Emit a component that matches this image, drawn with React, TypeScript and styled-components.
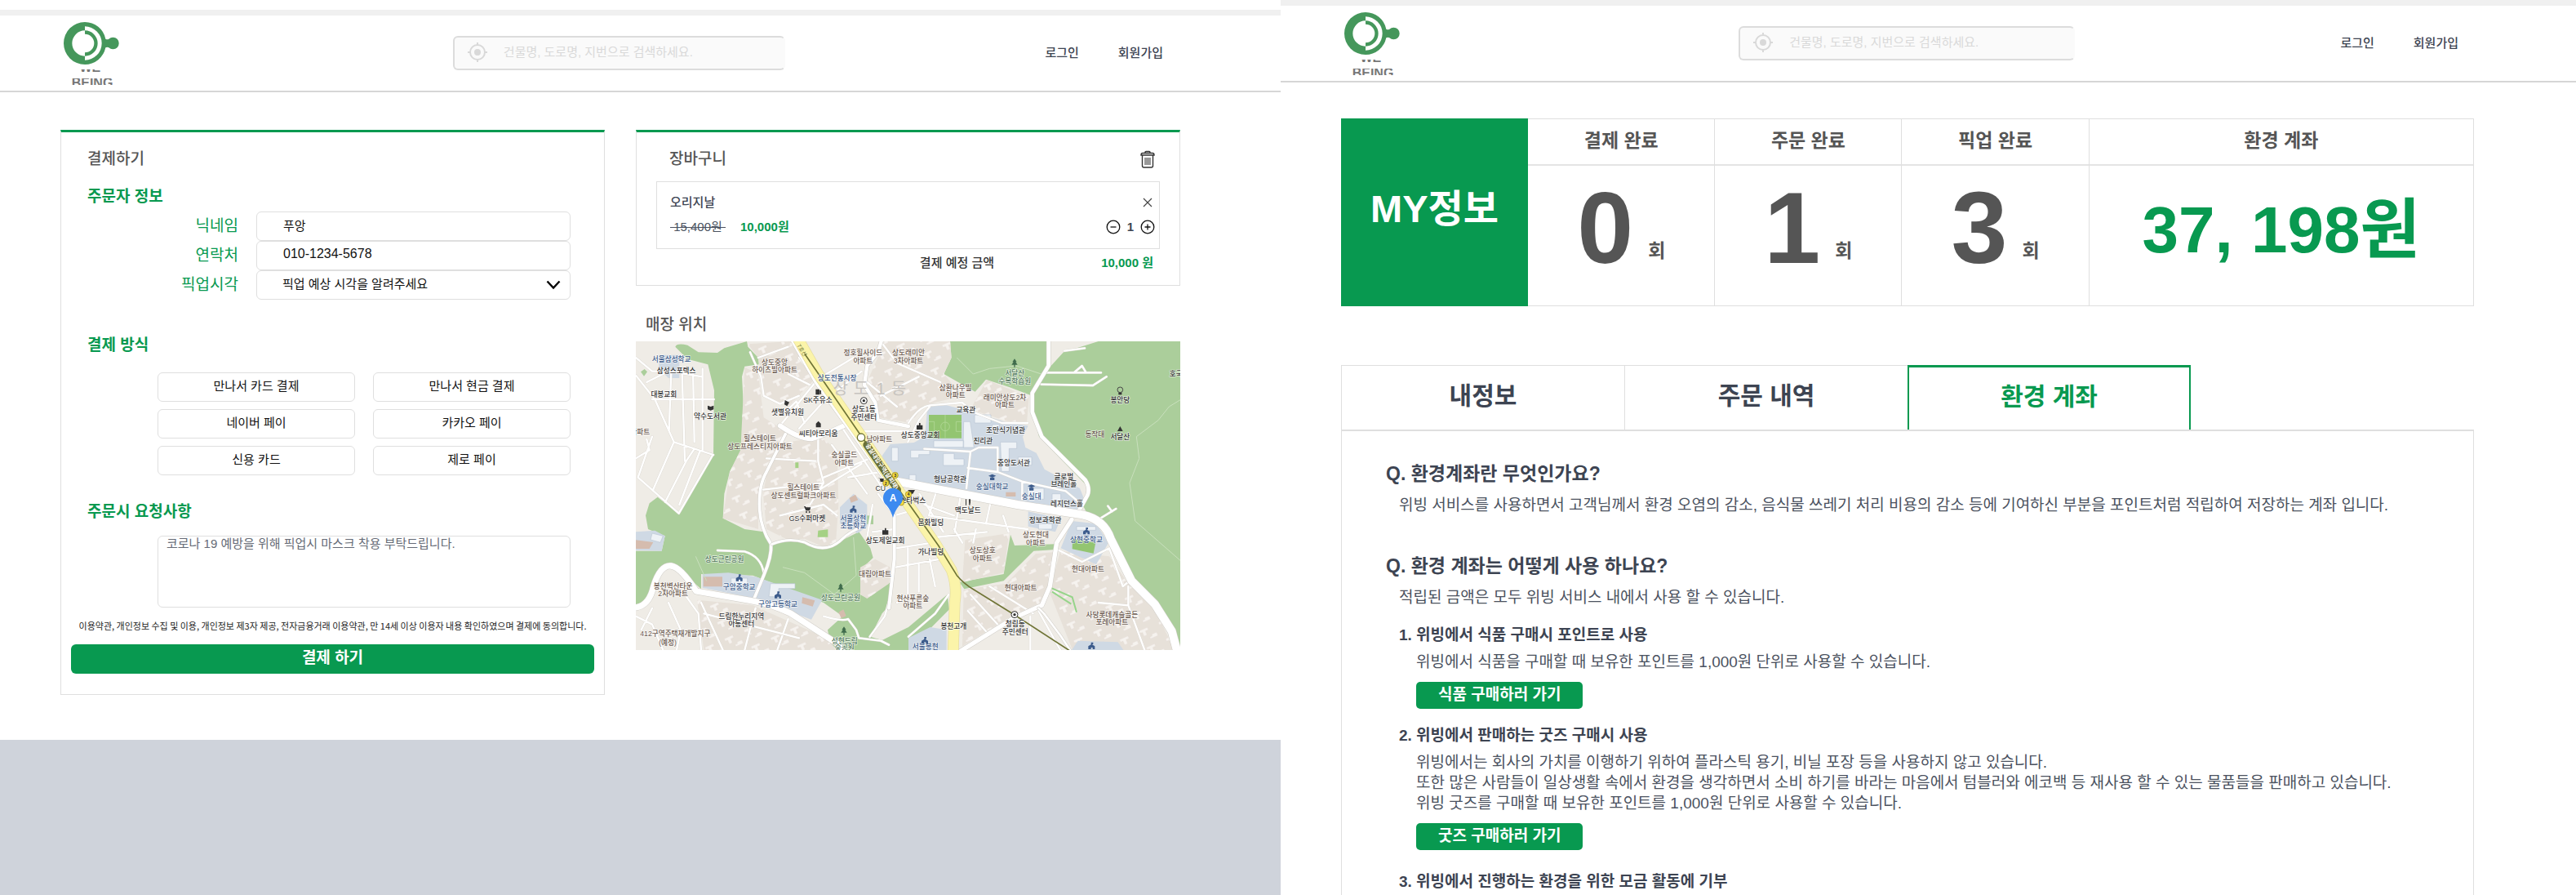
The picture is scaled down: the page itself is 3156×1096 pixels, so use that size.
import React from "react";
import styled, { createGlobalStyle } from "styled-components";

const color = {
  green: "#089950",
  logo: "#45975b",
  ink: "#3d4452",
  body: "#4b5260",
  title: "#555555",
  line: "#dfdfdf",
  pale: "#d9d9d9",
  backdrop: "#cfd3db",
};

const GlobalStyle = createGlobalStyle`
  *, *::before, *::after { box-sizing: border-box; }
  body {
    margin: 0;
    background: #fff;
    color: ${color.ink};
    font-family: "Liberation Sans", "Noto Sans CJK KR", sans-serif;
    font-size: 15px;
    line-height: 22px;
  }
  button, input, select, textarea { font: inherit; color: inherit; margin: 0; }
  button { cursor: pointer; }
  h1, h2, h3, p, dl, dt, dd { margin: 0; }
`;

/* ---------- shell ---------- */

const Screens = styled.div`
  display: grid;
  grid-template-columns: 1569fr 1587fr;
  min-height: 100vh;
`;

const Screen = styled.section<{ $backdrop?: boolean }>`
  display: flex;
  flex-direction: column;
  min-width: 0;
  height: 100vh;
  overflow: hidden;
  background: ${(p) => (p.$backdrop ? color.backdrop : "#fff")};
`;

const Sheet = styled.div<{ $inset?: boolean }>`
  display: flex;
  flex-direction: column;
  flex: ${(p) => (p.$inset ? "none" : "1")};
  padding-top: ${(p) => (p.$inset ? "12px" : "0")};
  background: #fff;
`;

const TopStrip = styled.div`
  height: 7px;
  background: #f0f0f0;
`;

const Header = styled.header`
  display: grid;
  grid-template-columns: 354fr 302fr 344fr;
  align-items: center;
  height: 94px;
  padding: 0 144px 0 78px;
  border-bottom: 2px solid #d6d6d6;
`;

const LogoLink = styled.a`
  display: flex;
  flex-direction: column;
  align-self: start;
  align-items: center;
  width: 70px;
  padding-top: 8px;
  color: #777;
  text-decoration: none;
  font-size: 16px;
  line-height: 12px;
`;

const LogoMark = styled.svg`
  flex: none;
  width: 70px;
  height: 52px;
`;

const WordTail = styled.span`
  display: flex;
  align-items: flex-end;
  height: 4px;
  margin: 6px 0 7px;
  font-weight: 700;
  overflow: hidden;
`;

const WordHead = styled.span`
  height: 8px;
  font-weight: 700;
  overflow: hidden;
`;

const SearchBox = styled.label`
  display: flex;
  align-items: center;
  gap: 20px;
  height: 42px;
  padding: 0 16px 2px;
  border: 2px solid #dcdcdc;
  border-right-color: transparent;
  border-radius: 6px;
  background: #fafafa;
`;

const SearchInput = styled.input`
  flex: 1;
  min-width: 0;
  padding: 0;
  border: 0;
  outline: 0;
  background: transparent;
  &::placeholder { color: ${color.pale}; opacity: 1; }
`;

const Nav = styled.nav`
  display: flex;
  justify-content: flex-end;
  gap: 48px;
`;

const NavLink = styled.a`
  color: ${color.ink};
  font-weight: 500;
  text-decoration: none;
`;

/* ---------- checkout ---------- */

const Checkout = styled.main`
  display: grid;
  grid-template-columns: 1fr 1fr;
  align-items: start;
  gap: 38px;
  padding: 46px 123px 55px 74px;
`;

const Card = styled.section<{ $pad: string }>`
  padding: ${(p) => p.$pad};
  border: 1px solid ${color.line};
  border-top: 3px solid ${color.green};
`;

const FormBody = styled.div`
  padding: 0 29px 0 20px;
`;

const CardTitle = styled.h2`
  font-size: 19px;
  font-weight: 500;
  line-height: 28px;
  color: ${color.title};
`;

const GroupTitle = styled.h3<{ $top: number }>`
  margin-top: ${(p) => p.$top}px;
  font-size: 19px;
  font-weight: 700;
  line-height: 28px;
  color: ${color.green};
`;

const Fields = styled.div`
  display: grid;
  grid-template-columns: 185px 1fr;
  column-gap: 22px;
  align-items: center;
  margin-top: 4px;
`;

const FieldLabel = styled.label`
  color: ${color.green};
  font-size: 19px;
  text-align: right;
`;

const TextField = styled.input<{ $numeric?: boolean }>`
  width: 100%;
  height: 36px;
  padding: 0 32px 4px;
  border: 1px solid ${color.line};
  border-radius: 6px;
  background: #fff;
  color: #111;
  font-size: ${(p) => (p.$numeric ? "16px" : "15px")};
`;

const SelectWrap = styled.div`
  display: grid;
  align-items: center;
  & > * { grid-area: 1 / 1; }
  & > svg { justify-self: end; margin-right: 12px; pointer-events: none; }
`;

const SelectField = styled.select`
  appearance: none;
  width: 100%;
  height: 36px;
  padding: 0 31px 3px;
  border: 1px solid ${color.line};
  border-radius: 6px;
  background: #fff;
  color: #111;
`;

const PayGrid = styled.div`
  display: grid;
  grid-template-columns: 1fr 1fr;
  gap: 9px 22px;
  margin-top: 19px;
  padding-left: 86px;
`;

const PayButton = styled.button`
  height: 36px;
  padding: 0 0 3px;
  border: 1px solid ${color.line};
  border-radius: 6px;
  background: #fff;
  color: #111;
`;

const RequestRow = styled.div`
  display: flex;
  margin-top: 15px;
  padding-left: 86px;
`;

const RequestBox = styled.textarea`
  width: 100%;
  height: 88px;
  padding: 0 10px;
  border: 1px solid ${color.line};
  border-radius: 6px;
  line-height: 18px;
  resize: none;
  &::placeholder { color: #666b76; opacity: 1; }
`;

const Terms = styled.p`
  margin-top: 12px;
  color: #222;
  font-family: "Noto Sans CJK KR", sans-serif;
  font-size: 11px;
  line-height: 20px;
  text-align: center;
`;

const SubmitButton = styled.button`
  width: 100%;
  height: 36px;
  margin-top: 13px;
  padding: 0 0 2px;
  border: 0;
  border-radius: 6px;
  background: ${color.green};
  color: #fff;
  font-size: 19px;
  font-weight: 700;
`;

const CartHead = styled.div`
  display: flex;
  align-items: center;
  justify-content: space-between;
  padding: 0 6px 0 16px;
`;

const IconButton = styled.button`
  display: flex;
  justify-content: center;
  align-items: center;
  width: 18px;
  height: 22px;
  padding: 0;
  border: 0;
  background: none;
  color: #333;
`;

const CartItem = styled.div`
  display: grid;
  row-gap: 8px;
  margin-top: 13px;
  padding: 14px 5px 15px 16px;
  border: 1px solid ${color.line};
`;

const ItemRow = styled.div`
  display: flex;
  align-items: center;
  justify-content: space-between;
`;

const ItemName = styled.span`
  font-weight: 500;
`;

const Prices = styled.span`
  display: flex;
  gap: 18px;
  white-space: pre;
`;

const OldPrice = styled.del`
  color: ${color.body};
`;

const Price = styled.strong`
  color: ${color.green};
  font-weight: 700;
`;

const Stepper = styled.div`
  display: flex;
  align-items: center;
  gap: 8px;
  font-weight: 700;
`;

const TotalRow = styled.div`
  display: flex;
  justify-content: flex-end;
  margin-top: 6px;
  padding-right: 8px;
  color: #333;
  font-weight: 500;
`;

const TotalPrice = styled(Price)`
  width: 195px;
  text-align: right;
`;

const MapTitle = styled(CardTitle)`
  margin: 34px 0 6px;
  padding-left: 12px;
`;

const MapSvg = styled.svg`
  display: block;
  width: 100%;
  height: auto;
`;

/* ---------- my page ---------- */

const MyPage = styled.main`
  display: flex;
  flex: 1;
  flex-direction: column;
  padding: 44px 125px 0 74px;
`;

const Stats = styled.dl`
  display: grid;
  grid-template-columns: 229fr 229fr 229fr 229fr 471fr;
  height: 230px;
`;

const StatsTitle = styled.h1`
  display: flex;
  align-items: center;
  justify-content: center;
  padding-bottom: 8px;
  background: ${color.green};
  color: #fff;
  font-size: 47px;
  font-weight: 700;
  line-height: 60px;
`;

const Stat = styled.div`
  display: grid;
  grid-template-rows: 57px 1fr;
  border: 1px solid ${color.line};
  border-left-width: 0;
`;

const StatName = styled.dt`
  padding-top: 10px;
  border-bottom: 2px solid #e4e4e4;
  color: ${color.title};
  font-size: 23px;
  font-weight: 700;
  line-height: 32px;
  text-align: center;
`;

const StatCount = styled.dd`
  display: flex;
  align-items: flex-start;
  justify-content: center;
  gap: 18px;
  color: #555;
  font-size: 124px;
  font-weight: 700;
  line-height: 152px;
`;

const StatUnit = styled.span`
  margin-top: 88px;
  font-size: 23px;
  line-height: 32px;
`;

const StatMoney = styled.dd`
  display: flex;
  align-items: center;
  justify-content: center;
  padding-bottom: 14px;
  color: ${color.green};
  font-size: 80px;
  font-weight: 700;
  line-height: 100px;
  white-space: nowrap;
`;

const Tabs = styled.div`
  display: grid;
  grid-template-columns: repeat(4, 1fr);
  margin-top: 72px;
`;

const Tab = styled.button<{ $active?: boolean }>`
  height: 79px;
  padding: 0 0 4px;
  border: 1px solid ${color.line};
  border-width: ${(p) => (p.$active ? "3px 2px 0" : "1px 0 0 1px")};
  border-color: ${(p) => (p.$active ? color.green : color.line)};
  background: #fff;
  color: ${(p) => (p.$active ? color.green : color.ink)};
  font-size: 30px;
  font-weight: 700;
`;

const Panel = styled.div`
  flex: 1;
  padding: 35px 54px 0;
  border: 1px solid ${color.line};
  border-width: 2px 1px 0;
`;

const Question = styled.h2<{ $top?: number }>`
  margin-top: ${(p) => p.$top ?? 0}px;
  font-size: 23px;
  font-weight: 700;
  line-height: 34px;
`;

const Answer = styled.p`
  margin: 9px 0 0 16px;
  color: ${color.body};
  font-size: 19px;
  line-height: 26px;
`;

const UseCase = styled.section<{ $top: number }>`
  margin: ${(p) => p.$top}px 0 0 16px;
`;

const UseTitle = styled.h3`
  font-size: 19px;
  font-weight: 700;
  line-height: 26px;
`;

const UseText = styled.p`
  margin: 7px 0 12px 21px;
  color: ${color.body};
  font-size: 19px;
  line-height: 25px;
`;

const GoButton = styled.button`
  height: 33px;
  margin-left: 21px;
  padding: 0 27px 2px;
  border: 0;
  border-radius: 5px;
  background: ${color.green};
  color: #fff;
  font-size: 19px;
  font-weight: 700;
`;

/* ---------- drawings ---------- */

const TargetIcon = () => (
  <svg width="24" height="26" viewBox="0 0 24 26" fill="none" stroke={color.pale} strokeWidth="2" aria-hidden="true">
    <circle cx="12" cy="13" r="9" />
    <circle cx="12" cy="13" r="4" fill={color.pale} stroke="none" />
    <path d="M12 1v4M12 21v4M0 13h4M20 13h4" />
  </svg>
);

const TrashIcon = () => (
  <svg width="18" height="22" viewBox="0 0 18 22" fill="none" stroke="#333" strokeWidth="1.4" aria-hidden="true">
    <path d="M6 3.500V2.500Q6 1.500 7 1.500h4q1 0 1 1v1M1 6Q1 3.500 3 3.500h12q2 0 2 2.500zM2.500 6v13q0 2 2 2h9q2 0 2-2V6" />
    <path d="M6 9v9M8 9v9M10 9v9M12 9v9" strokeWidth="1" />
  </svg>
);

const CloseIcon = () => (
  <svg width="12" height="12" viewBox="0 0 12 12" stroke="#444" strokeWidth="1.2" aria-hidden="true">
    <path d="M1 1l10 10M11 1L1 11" />
  </svg>
);

const RoundIcon = ({ plus }: { plus?: boolean }) => (
  <svg width="18" height="18" viewBox="0 0 18 18" fill="none" stroke="#111" strokeWidth="1.3" aria-hidden="true">
    <circle cx="9" cy="9" r="7.800" />
    <path d={plus ? "M5.500 9h7M9 5.500v7" : "M5.500 9h7"} />
  </svg>
);

const Chevron = () => (
  <svg width="18" height="12" viewBox="0 0 18 12" fill="none" stroke="#000" strokeWidth="2.400" aria-hidden="true">
    <path d="M1.500 1.500L9 9.500l7.500-8" />
  </svg>
);

const BrandLogo = () => (
  <LogoLink href="#home" aria-label="WE-BEING">
    <LogoMark viewBox="0 0 208 156" preserveAspectRatio="xMinYMin meet" aria-hidden="true">
      <g fill={color.logo}>
        <path d="M78 0a78 78 0 0 0 0 156v-31a47 47 0 0 1 0-94z" />
        <path d="M78 0a78 78 0 0 1 76 62q6 4 12 0a22 22 0 1 1 0 32q-6-4-12 0a78 78 0 0 1-76 62v-16a62 62 0 0 0 0-124z" />
        <path d="M78 31a47 47 0 0 1 0 94v-13a34 34 0 0 0 0-68z" />
      </g>
    </LogoMark>
    <WordTail>WE-</WordTail>
    <WordHead>BEING</WordHead>
  </LogoLink>
);

type Tone = "poi" | "apt" | "blue" | "park";
const toneFill: Record<Tone, string> = { poi: "#333333", apt: "#6b5a50", blue: "#3d5c8c", park: "#557a60" };

const mapLabels: [number, number, string, Tone][] = [
  [131, 66, "서울삼성학교", "blue"],
  [149, 108, "삼성스포렉스", "poi"],
  [103, 195, "대봉교회", "poi"],
  [273, 276, "약수도서관", "poi"],
  [16, 334, "아파트", "apt"],
  [510, 78, "상도중앙", "apt"],
  [510, 106, "하이츠빌아파트", "apt"],
  [835, 43, "정호힐사이드", "apt"],
  [835, 72, "아파트", "apt"],
  [1002, 43, "상도래미안", "apt"],
  [1002, 72, "3차아파트", "apt"],
  [740, 134, "상도전통시장", "blue"],
  [669, 217, "SK주유소", "poi"],
  [558, 261, "샛별유치원", "poi"],
  [838, 249, "상도1동", "poi"],
  [838, 279, "주민센터", "poi"],
  [671, 338, "씨티아모리움", "poi"],
  [895, 359, "남아파트", "apt"],
  [456, 357, "힐스테이트", "apt"],
  [456, 386, "상도프레스티지아파트", "apt"],
  [766, 418, "숭실골드", "apt"],
  [766, 447, "아파트", "apt"],
  [616, 537, "힐스테이트", "apt"],
  [616, 566, "상도센트럴파크아파트", "apt"],
  [899, 539, "CU", "poi"],
  [630, 651, "GS수퍼마켓", "poi"],
  [799, 651, "서울상현", "blue"],
  [799, 679, "초등학교", "blue"],
  [917, 732, "상도제일교회", "poi"],
  [326, 802, "상도근린공원", "park"],
  [879, 855, "대림아파트", "apt"],
  [137, 899, "봉천벽산타운", "apt"],
  [137, 928, "2차아파트", "apt"],
  [380, 902, "구암중학교", "blue"],
  [522, 965, "구암고등학교", "blue"],
  [753, 941, "상도근린공원", "park"],
  [388, 1010, "드림한누리지역", "poi"],
  [388, 1039, "아동센터", "poi"],
  [145, 1075, "412구역주택재개발지구", "apt"],
  [117, 1106, "(예정)", "apt"],
  [767, 1101, "성현드림", "park"],
  [767, 1124, "숲공원", "park"],
  [1018, 944, "현산푸른숲", "apt"],
  [1018, 972, "아파트", "apt"],
  [1175, 170, "삼환나우빌", "apt"],
  [1175, 198, "아파트", "apt"],
  [1393, 118, "서달산", "park"],
  [1393, 147, "수목학습원", "park"],
  [1356, 206, "래미안상도2차", "apt"],
  [1356, 234, "아파트", "apt"],
  [1213, 252, "교육관", "poi"],
  [1046, 346, "상도중앙교회", "poi"],
  [1359, 327, "조만식기념관", "poi"],
  [1276, 366, "진리관", "poi"],
  [1389, 447, "중앙도서관", "poi"],
  [1155, 508, "형남공학관", "poi"],
  [1310, 533, "숭실대학교", "blue"],
  [1454, 570, "숭실대", "blue"],
  [1573, 497, "글로벌", "poi"],
  [1573, 525, "브레인홀", "poi"],
  [1584, 598, "레지던스홀", "poi"],
  [1018, 586, "스타벅스", "poi"],
  [1220, 621, "맥도날드", "poi"],
  [1084, 667, "문화빌딩", "poi"],
  [1505, 658, "정보과학관", "poi"],
  [1084, 775, "가나빌딩", "poi"],
  [1470, 712, "상도현대", "apt"],
  [1470, 741, "아파트", "apt"],
  [1656, 730, "상현중학교", "blue"],
  [1274, 768, "상도상호", "apt"],
  [1274, 797, "아파트", "apt"],
  [1662, 838, "현대아파트", "apt"],
  [1415, 905, "현대아파트", "apt"],
  [1394, 1038, "청림동", "poi"],
  [1394, 1067, "주민센터", "poi"],
  [1168, 1048, "봉천고개", "poi"],
  [1750, 1004, "사당롯데캐슬골든", "apt"],
  [1750, 1033, "포레아파트", "apt"],
  [1780, 216, "봉안당", "poi"],
  [1687, 343, "동작대", "apt"],
  [1780, 352, "서달산", "poi"],
  [1985, 119, "호국", "poi"],
  [1064, 1122, "서울봉현", "blue"],
];

const blocks = [
  "M400 95L450 120 470 280 550 330 480 460 450 560 450 690 320 650 345 480 385 400z",
  "M500 380L680 350 740 400 745 600 735 740 690 755 620 725 560 730 480 690 468 560z",
  "M412 10L570 0 655 140 560 240 475 200 450 60z",
  "M915 0L1155 0 1160 60 1132 120 1200 200 1060 235 1010 300 895 280 850 150z",
  "M1290 142L1445 205 1437 300 1370 295 1230 250z",
  "M1210 730L1372 705 1352 850 1200 885z",
  "M1205 912L1360 890 1470 780 1535 775 1510 950 1380 1010 1200 1120z",
  "M1560 770L1740 790 1810 890 1900 970 1980 1134 1605 1134 1520 920z",
  "M225 950L430 970 700 1090 740 1134 250 1134z",
  "M825 830L880 800 935 830 930 890 850 945 825 930z",
];

const greens = [
  "M145 20Q150 5 190 14L230 40 300 42 325 25 408 0 412 20 450 60 452 85 400 92 390 130 398 280 385 400 345 480 325 560 320 650 400 690 470 700 500 745 600 728 680 762 760 730 820 700 862 760 872 795 825 840 825 930 850 942 935 885 940 960 905 1000 862 1085 905 1098 1002 1050 1145 930 1152 985 1082 1055 1002 1134 720 1134 705 1060 760 1010 690 960 430 860 240 855 240 910 150 830 90 830 60 930 0 975 0 770 95 770 107 715 45 690 36 640 50 595 80 572 155 632 250 480 285 420 288 180 265 85 190 65z",
  "M1155 0H1512L1517 95 1457 200 1372 168 1287 140 1247 185 1132 120 1160 60z",
  "M1700 0H2001V1134H1990L1970 1065 1907 960 1827 880 1722 680 1662 640 1642 600 1667 540 1482 350 1457 250 1462 190 1517 100 1572 40 1652 15z",
  "M1377 710L1392 750 1542 745V765L1462 770 1352 880 1207 910 1190 885 1352 855z",
  "M845 640h28v32h-28z",
  "M18 112l14-10 10 10-12 16z",
];

const campuses = [
  "M1072 240L1142 235 1242 260 1372 300 1442 310 1422 350 1432 390 1472 410 1502 470 1632 540 1652 590 1622 625 1402 590 1002 515 930 490 905 420 935 378 1022 372 1062 350z",
  "M1602 660L1692 670 1737 740 1692 820 1562 760z",
  "M245 855L340 850 440 865 685 950 645 1022 440 945 245 905z",
  "M750 610L800 560 850 600 850 680 815 705 750 670z",
  "M1442 625L1562 650 1542 700 1442 680z",
  "M1002 1090L1082 1050 1142 1060V1134H1002z",
  "M1625 1100L1772 1105 1792 1134H1602z",
  "M0 700L70 695 107 715 95 770 0 768z",
  "M85 50H160V135H120L85 100z",
];

const halls = [
  "M1205 295h24l14 95h-40zM1245 270h60v30h-60zM1095 365h110v24H1095zM1340 370h60v24h-28v84h-28zM1130 412h40v20h36v24h-76zM1405 425h50v30h-50zM1010 400h70v16h-40v12h-30zM1440 540h60v40h-60zM1530 560h32v50h-32zM1310 305h26v26h-26z",
  "M1005 490h24v24h-24zM1620 680h70v14h-70zM350 870h60v26h-60zM495 890h90v18h-60v30h-36zM60 705l40 10-10 24-36-10zM940 390h24v50h-24zM1480 670h50v20h-50z",
];

const narrowRoads =
  "M130 110L122 330M170 120L180 440M210 100L215 370M245 100V400M60 213H287M0 125L70 213 140 370 285 417M60 350L8 500 158 632 283 417M140 370L62 548M185 440L108 590M215 395L185 440M235 405L160 600M40 150L120 110 245 130M0 60L60 110 120 110M40 360L50 400 0 430" +
  "M660 150L530 310M700 210L600 320M620 300L590 220 540 270M760 320L920 560M720 380L850 560M690 500L860 430M650 560L830 450M780 500L900 480M560 120L640 160M600 60L700 190M700 120L800 60M740 180L830 110M830 330H1002M670 360V440L690 520 640 600M480 430L660 440M468 545L690 520M530 640L690 600 740 640M870 600L850 720M890 560L950 640 1002 625M870 700L950 690M955 760L1090 740M955 830L1120 800M1000 760V930L960 960M1040 820V920M1080 800L1100 900" +
  "M1102 560L1077 640M1192 575L1172 700M1302 600L1287 670M1077 640L1440 690M1100 720L1290 700M1042 560L1130 700M1060 600L1170 640M1170 690L1200 740M1250 690L1240 740M1350 640L1370 700" +
  "M1060 395L1230 405 1215 540M1230 405L1260 390H1330V480L1220 465M1330 480L1420 515 1580 550 1640 600M1420 515V580M1000 370L1040 290 1080 240M1200 225L1240 260 1345 300 1440 300" +
  "M1002 300Q1040 240 1080 235L1200 225M1510 115L1710 115M1490 158L1680 162 1730 130M1610 115L1640 90 1655 115M1700 655L1765 615M1735 605L1750 625M1575 35L1650 25" +
  "M300 768L400 772Q460 790 470 850M690 1010Q760 1030 780 1020L810 1060 820 1090 900 1100 930 1115M930 955L915 1010 860 1085M60 980L20 1060M120 960L165 1060 150 1134M180 930L230 1000 240 1134M0 1010L60 1040 100 1134M240 960L320 1134M440 980L400 1134M560 1020L520 1134M250 1000L600 1090" +
  "M1230 930L1330 1040M1300 900L1460 1000M1540 760L1640 810 1740 760 1790 900 1815 880M1480 990L1560 1134M1450 1010V1134M1810 900V970L1700 960M1810 970L1870 1134M1220 990L1300 1080M1740 740L1820 880M1002 1085L1100 1000 1150 930M420 40L460 130 470 200 530 230 600 200M450 60L560 20M900 0L960 80M960 80L1120 150M900 200L1040 130M850 150L960 240";

const wideRoads: [string, number][] = [
  ["M550 340L480 480Q450 530 455 620 460 690 497 745 500 790 470 860L435 945", 11],
  ["M500 745Q560 720 620 738 700 785 760 725 785 700 825 685", 9],
  ["M530 310Q600 358 645 358 690 345 765 310", 18],
  ["M905 -10L890 40 850 90 840 160 880 225 890 290 1002 312", 13],
  ["M950 640V800L930 980", 12],
  ["M570 -10L660 150 800 345 930 530", 10],
  ["M0 978Q50 970 65 900 90 820 130 825 165 830 222 918L420 952Q500 965 570 1000L740 1110 760 1140", 22],
  ["M1517 -10V90L1457 190V260L1492 350 1652 510Q1670 540 1660 565L1627 625", 14],
  ["M1602 655L1547 740 1522 900 1492 970 1392 1015 1190 1140", 16],
  ["M1600 1140L1560 1080 1500 1000 1480 980", 8],
  ["M960 515L1402 600 1642 637Q1722 655 1745 725L1822 880 1907 965 1970 1065 1990 1140", 30],
];

const avenue = "M590 -20L670 120 830 350 960 540 1102 745 1160 840Q1182 900 1172 960L1166 1150";

const StoreMap = () => (
  <MapSvg viewBox="0 0 2001 1134" role="img" aria-label="매장 위치 지도">
    <defs>
      <pattern id="towers" width="78" height="66" patternUnits="userSpaceOnUse" patternTransform="rotate(-24)">
        <path d="M8 8h34v10H30v16H18V18H8zM46 38h20v14H36v-8h10z" fill="#f6f3ef" stroke="#ddd6cd" strokeWidth="1" />
      </pattern>
      <clipPath id="mapFrame">
        <rect width="2001" height="1134" />
      </clipPath>
    </defs>
    <g clipPath="url(#mapFrame)">
      <rect width="2001" height="1134" fill="#efece6" />
      {greens.map((d) => (
        <path key={d} d={d} fill="#abce9b" />
      ))}
      {blocks.map((d) => (
        <g key={d}>
          <path d={d} fill="#e7e1d9" />
          <path d={d} fill="url(#towers)" />
        </g>
      ))}
      {campuses.map((d) => (
        <path key={d} d={d} fill="#cfd9e4" />
      ))}
      {halls.map((d) => (
        <path key={d} d={d} fill="#eef2f6" stroke="#bac6d3" strokeWidth="2" />
      ))}
      <path d="M1077 270h120v86h-120zM1605 725l85 14-8 40-78-16z" fill="#93c571" />
      <path d="M1137 270v86M1077 295h20v36h-20M1197 295h-20v36h20" fill="none" stroke="#b9dda0" strokeWidth="2" />
      <circle cx="1137" cy="313" r="16" fill="none" stroke="#b9dda0" strokeWidth="2" />
      <path d="M248 865h70v36h-70zM612 940l46 12-8 22-40-12zM0 730l64 8-14 24H0zM785 575l22-12 10 20-26 10zM1360 554h36v16h-36zM745 995l18-10 10 24-18 8z" fill="#d5bcae" />
      <path d="M670 695l36-4v28h-38zM586 445h12v20h-12z" fill="#a5d184" />
      <path d="M1524 905L1604 940 1620 995M1530 920L1600 965" fill="none" stroke="#96d48a" strokeWidth="6" />
      <g fill="none" stroke="#c9e0bd" strokeWidth="3">
        <path d="M2001 215L1960 240 1920 290 1840 350 1850 430 1815 520 1835 660 2001 805" />
        <path d="M1180 60L1240 120 1300 100 1400 90 1490 120" />
        <path d="M540 830L620 850 730 930 810 860 800 720M220 790L260 880" />
      </g>
      <g fill="none" strokeLinejoin="round" strokeLinecap="round">
        <path d={narrowRoads} stroke="#d9d5ce" strokeWidth="9" />
        <path d={narrowRoads} stroke="#fff" strokeWidth="7" />
        {wideRoads.map(([d, w]) => (
          <g key={d}>
            <path d={d} stroke="#cfccc6" strokeWidth={w + 3} />
            <path d={d} stroke="#fff" strokeWidth={w} />
          </g>
        ))}
        <path d={avenue} stroke="#e4dca0" strokeWidth="41" />
        <path d={avenue} stroke="#fbf4a9" strokeWidth="37" />
        <path d="M622 48L830 350 1002 595 1112 750 1180 860Q1205 890 1242 912L1392 1005 1600 1140" stroke="#6f7436" strokeWidth="5" />
        <path d="M848 380L962 545" stroke="#6b7038" strokeWidth="26" />
      </g>
      <circle cx="828" cy="353" r="14" fill="#fff" stroke="#6f7436" strokeWidth="4" />
      <g fontSize="60" fill="#c6c3bf" textAnchor="middle">
        <text x="752" y="195">상</text>
        <text x="828" y="195">도</text>
        <text x="900" y="195">1</text>
        <text x="966" y="195">동</text>
      </g>
      <text x="850" y="378" transform="rotate(56 850 378)" fontSize="22" fontWeight="700" fill="#fff" dy="8">숭실대입구역(살피재)</text>
      <text x="592" y="16" transform="rotate(58 592 16)" fontSize="20" fill="#6f7436">7호선</text>
      <g fontSize="26" fontWeight="500" textAnchor="middle" stroke="#fff" strokeWidth="4" strokeOpacity="0.7" strokeLinejoin="round" paintOrder="stroke">
        {mapLabels.map(([x, y, label, tone], i) => (
          <text key={i} x={x} y={y + 9} fill={toneFill[tone]}>
            {label}
          </text>
        ))}
      </g>
      <g fill="#fff" stroke="#333" strokeWidth="3">
        <circle cx="838" cy="218" r="12" />
        <circle cx="1392" cy="1004" r="12" />
      </g>
      <g fill="#333">
        <circle cx="838" cy="218" r="5" />
        <circle cx="1392" cy="1004" r="5" />
        <path d="M661 176h14v20h-14zM676 180h5v14h-5zM264 236l11 4 11-4v14l-11 4-11-4zM662 316v-14l9-9 9 9v14zM548 216l16 8-8 14-10-6zM890 500l6 2 3 14h12v-12h-14z" />
        <path d="M915 686h5v8h8v16h-22v-16h9zM1041 300h5v8h8v16h-22v-16h9zM1212 580h3v22h-3zM1224 580h6v12l-2 10h-3z" />
        <path d="M1770 330l10-18 10 18zM618 606h5l2 4h18l-4 12h-14z" />
        <circle cx="627" cy="627" r="3" />
        <circle cx="638" cy="627" r="3" />
        <circle cx="1780" cy="178" r="10" fill="none" stroke="#444" strokeWidth="3" />
        <path d="M1774 188h12v8h-12z" />
        <path d="M1000 546h26l-8 14h-10z" />
      </g>
      <g fill="#3d5c8c">
        {[
          [799, 618],
          [380, 870],
          [522, 933],
          [1656, 698],
          [1062, 1100],
          [1675, 1120],
        ].map(([x, y]) => (
          <path key={x} d={`M${x - 12} ${y + 11}v-11l10-6v-8h8v6l-4 2 10 6v11h-8v-6h-6v6z`} />
        ))}
        <path d="M1296 494l14-6 14 6-14 6zM1302 500h16v10h-16zM1440 532l14-6 14 6-14 6zM1446 538h16v10h-16z" />
      </g>
      <g fill="#3f6b4c">
        {[
          [753, 905],
          [765, 1064],
          [1392, 80],
        ].map(([x, y]) => (
          <path key={x} d={`M${x} ${y - 16}l8 12h-4l7 10h-9v9h-4v-9h-9l7-10h-4z`} />
        ))}
      </g>
      <g fill="#f6dc3c" stroke="#8a7d20" strokeWidth="2">
        <circle cx="953" cy="492" r="11" />
        <circle cx="919" cy="521" r="11" />
        <circle cx="1002" cy="562" r="11" />
        <circle cx="975" cy="592" r="11" />
      </g>
      <g fontSize="16" fontWeight="700" fill="#333" textAnchor="middle">
        <text x="953" y="498">3</text>
        <text x="919" y="527">2</text>
        <text x="1002" y="568">4</text>
      </g>
      <path d="M945 648Q938 622 922 603A36 36 0 1 1 968 603Q952 622 945 648z" fill="#3d8af0" />
      <text x="945" y="588" fontSize="36" fontWeight="700" fill="#fff" textAnchor="middle">A</text>
    </g>
  </MapSvg>
);

/* ---------- composition ---------- */

const SiteHeader = ({ id }: { id: string }) => (
  <>
    <TopStrip />
    <Header>
      <BrandLogo />
      <SearchBox htmlFor={id}>
        <TargetIcon />
        <SearchInput id={id} aria-label="주소 검색" placeholder="건물명, 도로명, 지번으로 검색하세요." />
      </SearchBox>
      <Nav>
        <NavLink href="#login">로그인</NavLink>
        <NavLink href="#join">회원가입</NavLink>
      </Nav>
    </Header>
  </>
);

const payMethods = ["만나서 카드 결제", "만나서 현금 결제", "네이버 페이", "카카오 페이", "신용 카드", "제로 페이"];

const counts = [
  { name: "결제 완료", value: 0 },
  { name: "주문 완료", value: 1 },
  { name: "픽업 완료", value: 3 },
];

const CheckoutScreen = () => (
  <Screen $backdrop>
    <Sheet $inset>
      <SiteHeader id="search-checkout" />
      <Checkout>
        <Card $pad="19px 12px 25px">
          <FormBody>
            <CardTitle>결제하기</CardTitle>
            <GroupTitle $top={18}>주문자 정보</GroupTitle>
            <Fields>
              <FieldLabel htmlFor="nickname">닉네임</FieldLabel>
              <TextField id="nickname" defaultValue="푸앙" />
              <FieldLabel htmlFor="phone">연락처</FieldLabel>
              <TextField id="phone" type="tel" $numeric defaultValue="010-1234-5678" />
              <FieldLabel htmlFor="pickup">픽업시각</FieldLabel>
              <SelectWrap>
                <SelectField id="pickup">
                  <option>픽업 예상 시각을 알려주세요</option>
                </SelectField>
                <Chevron />
              </SelectWrap>
            </Fields>
            <GroupTitle $top={42}>결제 방식</GroupTitle>
            <PayGrid>
              {payMethods.map((m) => (
                <PayButton key={m} type="button">
                  {m}
                </PayButton>
              ))}
            </PayGrid>
            <GroupTitle $top={31}>주문시 요청사항</GroupTitle>
            <RequestRow>
              <RequestBox aria-label="주문시 요청사항" placeholder="코로나 19 예방을 위해 픽업시 마스크 착용 부탁드립니다." />
            </RequestRow>
          </FormBody>
          <Terms>
            이용약관, 개인정보 수집 및 이용, 개인정보 제3자 제공, 전자금융거래 이용약관, 만 14세 이상 이용자 내용 확인하였으며 결제에 동의합니다.
          </Terms>
          <SubmitButton type="button">결제 하기</SubmitButton>
        </Card>
        <div>
          <Card $pad="19px 24px 16px">
            <CartHead>
              <CardTitle>장바구니</CardTitle>
              <IconButton type="button" aria-label="비우기">
                <TrashIcon />
              </IconButton>
            </CartHead>
            <CartItem>
              <ItemRow>
                <ItemName>오리지날</ItemName>
                <IconButton type="button" aria-label="삭제">
                  <CloseIcon />
                </IconButton>
              </ItemRow>
              <ItemRow>
                <Prices>
                  <OldPrice>{" 15,400원 "}</OldPrice>
                  <Price>10,000원</Price>
                </Prices>
                <Stepper>
                  <IconButton type="button" aria-label="빼기">
                    <RoundIcon />
                  </IconButton>
                  1
                  <IconButton type="button" aria-label="더하기">
                    <RoundIcon plus />
                  </IconButton>
                </Stepper>
              </ItemRow>
            </CartItem>
            <TotalRow>
              결제 예정 금액
              <TotalPrice>10,000 원</TotalPrice>
            </TotalRow>
          </Card>
          <MapTitle>매장 위치</MapTitle>
          <StoreMap />
        </div>
      </Checkout>
    </Sheet>
  </Screen>
);

const MyPageScreen = () => (
  <Screen>
    <Sheet>
      <SiteHeader id="search-mypage" />
      <MyPage>
        <Stats>
          <StatsTitle>MY정보</StatsTitle>
          {counts.map((c) => (
            <Stat key={c.name}>
              <StatName>{c.name}</StatName>
              <StatCount>
                {c.value}
                <StatUnit>회</StatUnit>
              </StatCount>
            </Stat>
          ))}
          <Stat>
            <StatName>환경 계좌</StatName>
            <StatMoney>37, 198원</StatMoney>
          </Stat>
        </Stats>
        <Tabs role="tablist">
          <Tab type="button" role="tab" aria-selected="false">내정보</Tab>
          <Tab type="button" role="tab" aria-selected="false">주문 내역</Tab>
          <Tab type="button" role="tab" aria-selected="true" $active>환경 계좌</Tab>
        </Tabs>
        <Panel role="tabpanel">
          <Question>Q. 환경계좌란 무엇인가요?</Question>
          <Answer>
            위빙 서비스를 사용하면서 고객님께서 환경 오염의 감소, 음식물 쓰레기 처리 비용의 감소 등에 기여하신 부분을 포인트처럼 적립하여 저장하는 계좌 입니다.
          </Answer>
          <Question $top={44}>Q. 환경 계좌는 어떻게 사용 하나요?</Question>
          <Answer>적립된 금액은 모두 위빙 서비스 내에서 사용 할 수 있습니다.</Answer>
          <UseCase $top={20}>
            <UseTitle>1. 위빙에서 식품 구매시 포인트로 사용</UseTitle>
            <UseText>위빙에서 식품을 구매할 때 보유한 포인트를 1,000원 단위로 사용할 수 있습니다.</UseText>
            <GoButton type="button">식품 구매하러 가기</GoButton>
          </UseCase>
          <UseCase $top={20}>
            <UseTitle>2. 위빙에서 판매하는 굿즈 구매시 사용</UseTitle>
            <UseText>
              위빙에서는 회사의 가치를 이행하기 위하여 플라스틱 용기, 비닐 포장 등을 사용하지 않고 있습니다.
              <br />
              또한 많은 사람들이 일상생활 속에서 환경을 생각하면서 소비 하기를 바라는 마음에서 텀블러와 에코백 등 재사용 할 수 있는 물품들을 판매하고 있습니다.
              <br />
              위빙 굿즈를 구매할 때 보유한 포인트를 1,000원 단위로 사용할 수 있습니다.
            </UseText>
            <GoButton type="button">굿즈 구매하러 가기</GoButton>
          </UseCase>
          <UseCase $top={26}>
            <UseTitle>3. 위빙에서 진행하는 환경을 위한 모금 활동에 기부</UseTitle>
          </UseCase>
        </Panel>
      </MyPage>
    </Sheet>
  </Screen>
);

export default function App() {
  return (
    <>
      <GlobalStyle />
      <Screens>
        <CheckoutScreen />
        <MyPageScreen />
      </Screens>
    </>
  );
}
